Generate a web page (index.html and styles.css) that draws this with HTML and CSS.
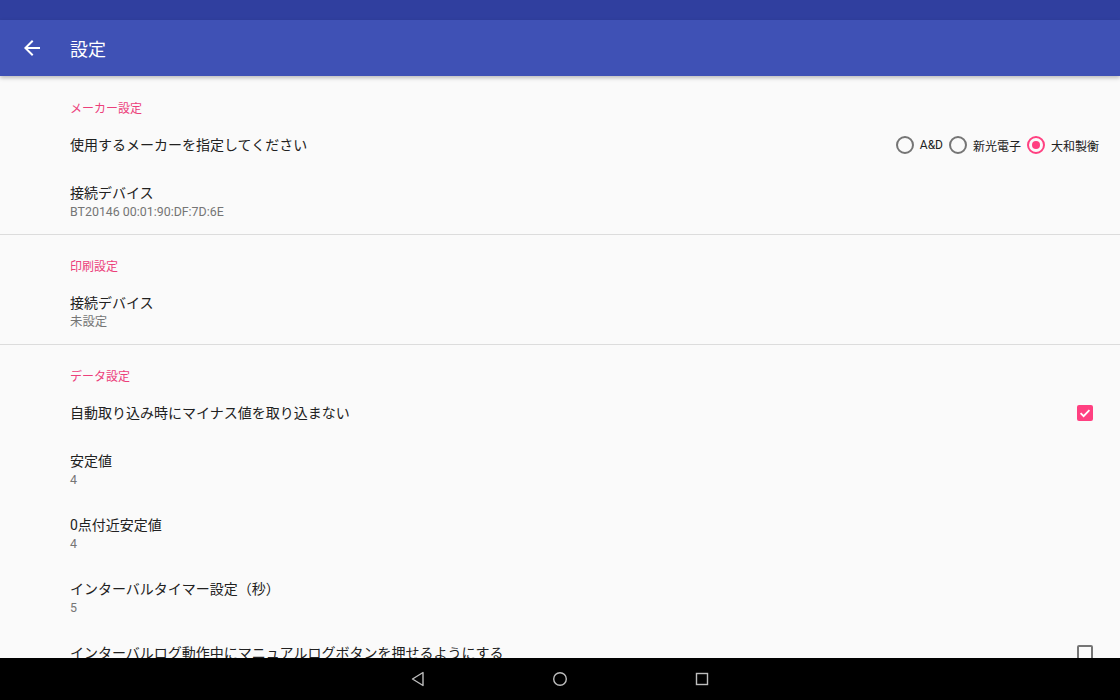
FILE: index.html
```html
<!DOCTYPE html>
<html lang="ja">
<head>
    <meta charset="UTF-8">
    <meta name="viewport" content="width=device-width, initial-scale=1.0">
    <title>設定</title>
    <link rel="stylesheet" href="styles.css">
</head>
<body>
    <div class="status-bar"></div>

    <header class="toolbar">
        <button type="button" class="back-btn" aria-label="戻る">
            <svg width="24" height="24" viewBox="0 0 24 24"><path d="M20 11H7.83l5.59-5.59L12 4l-8 8 8 8 1.41-1.41L7.83 13H20v-2z" fill="#fff"/></svg>
        </button>
        <h1 class="toolbar-title">設定</h1>
    </header>

    <main class="prefs">
        <section class="pref-section">
            <h2 class="pref-category">メーカー設定</h2>
            <div class="pref-row single">
                <span class="pref-title">使用するメーカーを指定してください</span>
                <div class="radio-group">
                    <label class="radio"><span class="radio-mark"></span>A&amp;D</label>
                    <label class="radio"><span class="radio-mark"></span>新光電子</label>
                    <label class="radio"><span class="radio-mark checked"></span>大和製衡</label>
                </div>
            </div>
            <div class="pref-row double">
                <span class="pref-title">接続デバイス</span>
                <span class="pref-summary">BT20146 00:01:90:DF:7D:6E</span>
            </div>
        </section>

        <section class="pref-section">
            <h2 class="pref-category tall">印刷設定</h2>
            <div class="pref-row double">
                <span class="pref-title">接続デバイス</span>
                <span class="pref-summary">未設定</span>
            </div>
        </section>

        <section class="pref-section last">
            <h2 class="pref-category">データ設定</h2>
            <div class="pref-row single">
                <span class="pref-title">自動取り込み時にマイナス値を取り込まない</span>
                <span class="checkbox checked">
                    <svg width="16" height="16" viewBox="0 0 16 16"><path d="M3.6 8.2l3 3 5.8-6" fill="none" stroke="#fff" stroke-width="1.8"/></svg>
                </span>
            </div>
            <div class="pref-row double">
                <span class="pref-title">安定値</span>
                <span class="pref-summary">4</span>
            </div>
            <div class="pref-row double">
                <span class="pref-title">0点付近安定値</span>
                <span class="pref-summary">4</span>
            </div>
            <div class="pref-row double">
                <span class="pref-title">インターバルタイマー設定（秒）</span>
                <span class="pref-summary">5</span>
            </div>
            <div class="pref-row double with-check">
                <span class="pref-title">インターバルログ動作中にマニュアルログボタンを押せるようにする</span>
                <span class="checkbox"></span>
            </div>
        </section>
    </main>

    <nav class="nav-bar">
        <svg width="16" height="16" viewBox="0 0 16 16"><path d="M13 1.5v13L2.5 8z" fill="none" stroke="#bdbdbd" stroke-width="1.4" stroke-linejoin="round"/></svg>
        <svg width="16" height="16" viewBox="0 0 16 16"><circle cx="8" cy="8" r="6.3" fill="none" stroke="#bdbdbd" stroke-width="1.4"/></svg>
        <svg width="16" height="16" viewBox="0 0 16 16"><rect x="2.5" y="2.5" width="11" height="11" fill="none" stroke="#bdbdbd" stroke-width="1.4"/></svg>
    </nav>
</body>
</html>
```

FILE: styles.css
```css
* {
    box-sizing: border-box;
}
body {
    margin: 0;
    width: 1120px;
    height: 700px;
    overflow: hidden;
    display: flex;
    flex-direction: column;
    background-color: #fafafa;
    font-family: Roboto, "Noto Sans CJK JP", sans-serif;
    color: #212121;
}
.status-bar {
    height: 20px;
    background-color: #303f9f;
    flex-shrink: 0;
}
.toolbar {
    height: 56px;
    flex-shrink: 0;
    display: flex;
    align-items: center;
    background-color: #3f51b5;
    box-shadow: 0 2px 4px rgba(0, 0, 0, 0.25);
    position: relative;
    z-index: 1;
}
.back-btn {
    background: none;
    border: none;
    padding: 0;
    margin-left: 20px;
    width: 24px;
    height: 24px;
    display: flex;
}
.toolbar-title {
    margin: 0 0 0 26px;
    font-size: 18px;
    font-weight: normal;
    color: #fff;
}
.prefs {
    flex: 1;
    overflow: hidden;
    padding-top: 1px;
}
.pref-section {
    border-bottom: 1px solid #dcdcdc;
}
.pref-section.last {
    border-bottom: none;
}
.pref-category {
    margin: 0;
    padding: 24px 0 3px 70px;
    font-size: 12px;
    line-height: 16px;
    font-weight: normal;
    color: #ec407a;
}
.pref-category.tall {
    padding-bottom: 5px;
}
.pref-row {
    display: flex;
    padding-left: 70px;
}
.pref-row.single {
    align-items: center;
    justify-content: space-between;
    padding-top: 15px;
    padding-bottom: 15px;
    min-height: 50px;
}
.pref-row.double {
    flex-direction: column;
    padding-top: 13px;
    padding-bottom: 13px;
}
.pref-row.with-check {
    position: relative;
}
.pref-title {
    font-size: 14px;
    line-height: 20px;
}
.pref-summary {
    font-size: 12.4px;
    line-height: 18px;
    color: #757575;
}
.radio-group {
    display: flex;
    align-items: center;
    gap: 6px;
    padding-right: 21px;
}
.radio {
    display: flex;
    align-items: center;
    gap: 6px;
    font-size: 12px;
    color: #212121;
}
.radio-mark {
    width: 18px;
    height: 18px;
    border: 2px solid #757575;
    border-radius: 50%;
    display: flex;
    align-items: center;
    justify-content: center;
}
.radio-mark.checked {
    border-color: #ff4081;
}
.radio-mark.checked::after {
    content: "";
    width: 8px;
    height: 8px;
    border-radius: 50%;
    background-color: #ff4081;
}
.checkbox {
    width: 16px;
    height: 16px;
    margin-right: 27px;
    border: 2px solid #757575;
    border-radius: 2px;
    display: flex;
}
.checkbox.checked {
    border: none;
    background-color: #ff4081;
}
.with-check .checkbox {
    position: absolute;
    right: 0;
    top: 15px;
}
.nav-bar {
    height: 42px;
    flex-shrink: 0;
    background-color: #000;
    display: flex;
    align-items: center;
    justify-content: center;
    gap: 126px;
    position: relative;
    z-index: 1;
}
```
